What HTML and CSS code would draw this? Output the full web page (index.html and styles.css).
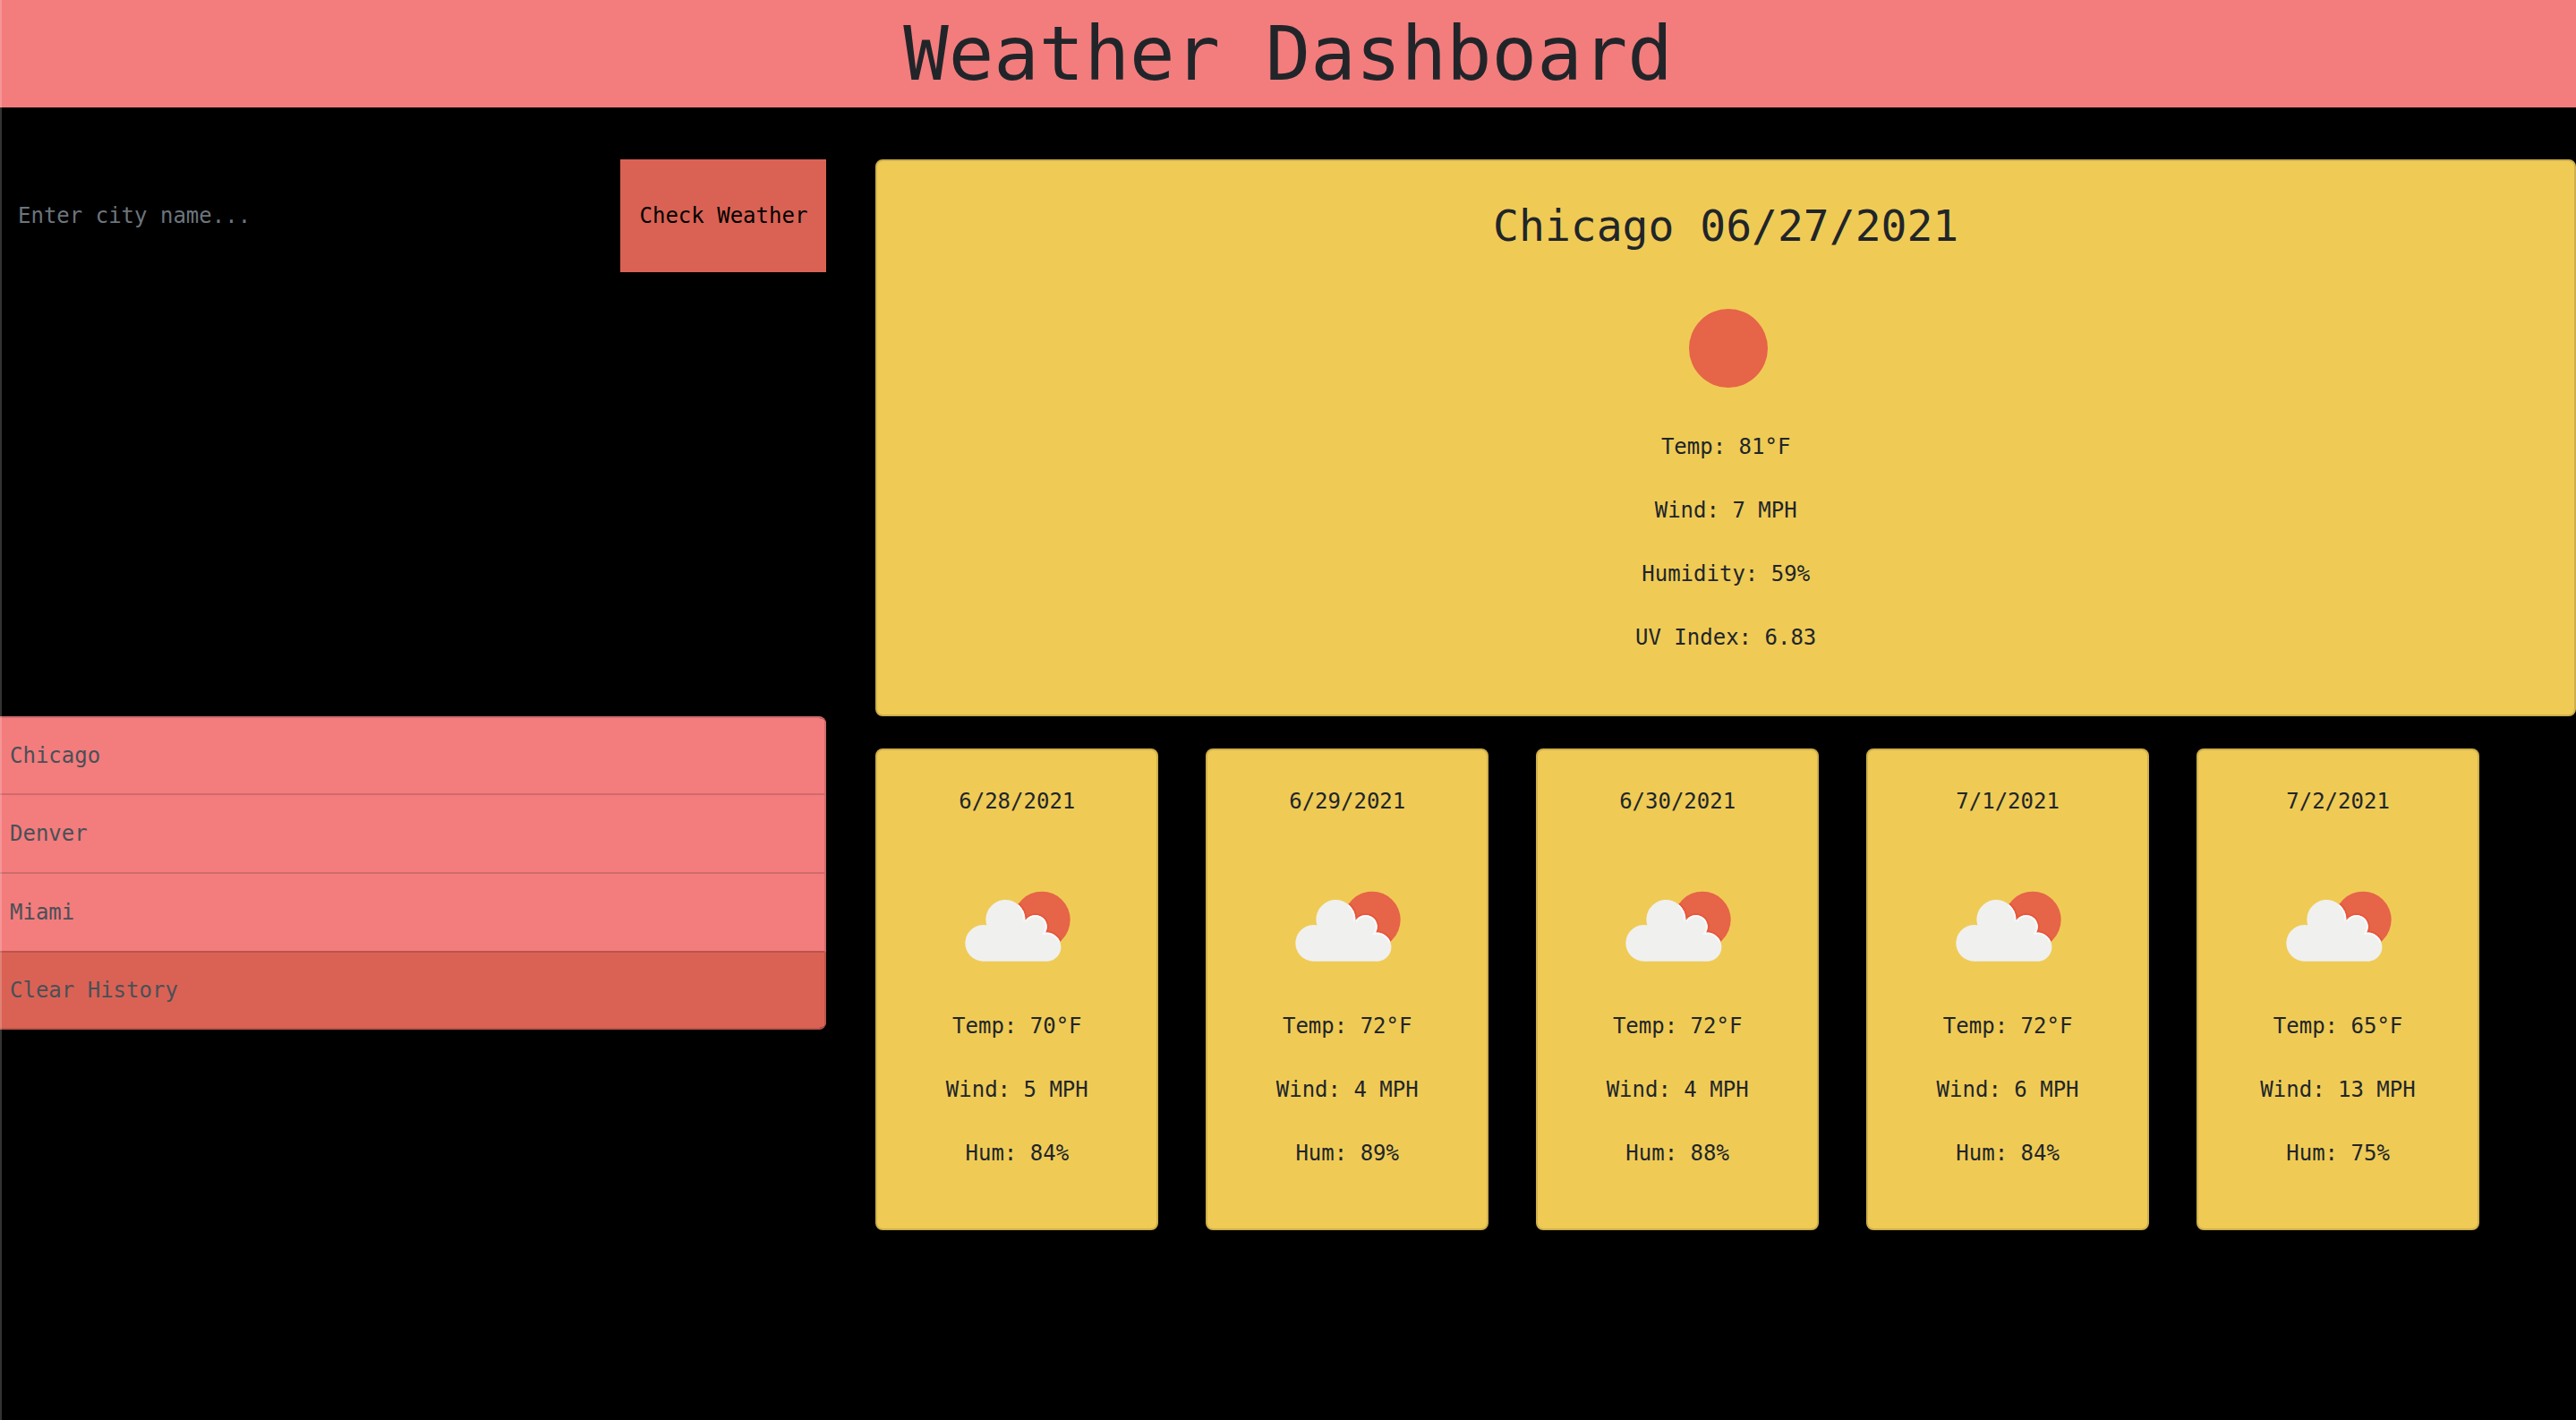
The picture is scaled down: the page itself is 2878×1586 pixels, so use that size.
FILE: index.html
```html
<!DOCTYPE html>
<html lang="en">
<head>
<meta charset="utf-8">
<meta name="viewport" content="width=device-width, initial-scale=1">
<title>Weather Dashboard</title>
<link rel="stylesheet" href="styles.css">
</head>
<body>
<svg class="sprite" aria-hidden="true">
  <defs>
    <clipPath id="sun-clip"><circle cx="372" cy="172" r="95"/></clipPath>
    <clipPath id="cloud-clip"><path d="M177 311A61 61 0 1 1 187 190A66 66 0 1 1 316 176A39 39 0 0 1 384 215A48 48 0 1 1 392 311Z"/></clipPath>
    <symbol id="few-clouds" viewBox="96 75 384 240">
      <circle cx="372" cy="172" r="95" fill="#e66447"/>
      <g clip-path="url(#sun-clip)"><path d="M177 311A61 61 0 1 1 187 190A66 66 0 1 1 316 176A39 39 0 0 1 384 215A48 48 0 1 1 392 311Z" fill="none" stroke="#e8563b" stroke-width="12"/></g>
      <path d="M177 311A61 61 0 1 1 187 190A66 66 0 1 1 316 176A39 39 0 0 1 384 215A48 48 0 1 1 392 311Z" fill="#f0f0ee"/>
      <g clip-path="url(#sun-clip)"><g clip-path="url(#cloud-clip)"><path d="M177 311A61 61 0 1 1 187 190A66 66 0 1 1 316 176A39 39 0 0 1 384 215A48 48 0 1 1 392 311Z" fill="none" stroke="#f6fbfd" stroke-width="12"/></g></g>
    </symbol>
  </defs>
</svg>

<header class="banner">
  <h1 class="banner-title">Weather Dashboard</h1>
</header>

<main class="dashboard">
  <form class="search">
    <input class="search-input" type="text" placeholder="Enter city name..." aria-label="City name">
    <button class="search-button" type="button">Check Weather</button>
  </form>

  <section class="card current">
    <h2 class="current-title">Chicago 06/27/2021</h2>
    <svg class="current-icon" viewBox="0 0 96 90" role="img" aria-label="Clear sky"><circle cx="51" cy="45" r="44" fill="#e66447"/></svg>
    <p class="reading">Temp: 81°F</p>
    <p class="reading">Wind: 7 MPH</p>
    <p class="reading">Humidity: 59%</p>
    <p class="reading">UV Index: 6.83</p>
  </section>

  <div class="history">
    <button class="history-item" type="button">Chicago</button>
    <button class="history-item" type="button">Denver</button>
    <button class="history-item" type="button">Miami</button>
    <button class="history-item history-clear" type="button">Clear History</button>
  </div>

  <section class="forecast">
    <article class="card day">
      <h3 class="day-title">6/28/2021</h3>
      <svg class="day-icon" role="img" aria-label="Few clouds"><use href="#few-clouds"/></svg>
      <p class="reading">Temp: 70°F</p>
      <p class="reading">Wind: 5 MPH</p>
      <p class="reading">Hum: 84%</p>
    </article>
    <article class="card day">
      <h3 class="day-title">6/29/2021</h3>
      <svg class="day-icon" role="img" aria-label="Few clouds"><use href="#few-clouds"/></svg>
      <p class="reading">Temp: 72°F</p>
      <p class="reading">Wind: 4 MPH</p>
      <p class="reading">Hum: 89%</p>
    </article>
    <article class="card day">
      <h3 class="day-title">6/30/2021</h3>
      <svg class="day-icon" role="img" aria-label="Few clouds"><use href="#few-clouds"/></svg>
      <p class="reading">Temp: 72°F</p>
      <p class="reading">Wind: 4 MPH</p>
      <p class="reading">Hum: 88%</p>
    </article>
    <article class="card day">
      <h3 class="day-title">7/1/2021</h3>
      <svg class="day-icon" role="img" aria-label="Few clouds"><use href="#few-clouds"/></svg>
      <p class="reading">Temp: 72°F</p>
      <p class="reading">Wind: 6 MPH</p>
      <p class="reading">Hum: 84%</p>
    </article>
    <article class="card day">
      <h3 class="day-title">7/2/2021</h3>
      <svg class="day-icon" role="img" aria-label="Few clouds"><use href="#few-clouds"/></svg>
      <p class="reading">Temp: 65°F</p>
      <p class="reading">Wind: 13 MPH</p>
      <p class="reading">Hum: 75%</p>
    </article>
  </section>
</main>
</body>
</html>
```
FILE: styles.css
```css
* {
  box-sizing: border-box;
}

body {
  margin: 0;
  min-height: 100vh;
  background: #000;
  color: #212529;
  font-family: "DejaVu Sans Mono", monospace;
  font-size: 24px;
  line-height: 43px;
}

/* thin light edge down the left side of the window */
body::before {
  content: "";
  position: fixed;
  inset: 0 auto 0 0;
  width: 2px;
  background: rgba(255, 255, 255, 0.2);
}

h1, h2, h3, p {
  margin: 0;
  font-weight: 400;
}

input, button {
  border: 0;
  border-radius: 0;
  font: inherit;
}

.sprite {
  position: absolute;
  width: 0;
  height: 0;
}

.banner {
  background: #f37c7d;
  text-align: center;
}

.banner-title {
  font-size: 84px;
  line-height: 120px;
}

.dashboard {
  display: grid;
  grid-template-columns: minmax(0, 1fr) minmax(0, 2fr);
  padding-top: 58px;
}

.search {
  display: flex;
  align-self: start;
  height: 126px;
  margin-right: 36px;
}

.search-input {
  flex: 1;
  min-width: 0;
  padding: 0 20px;
  background: #000;
  color: #fff;
}

.search-input::placeholder {
  color: #6c757d;
  opacity: 1;
}

.search-button {
  padding: 0 21px;
  background: #da6254;
  color: #000;
}

.card {
  display: flex;
  flex-direction: column;
  align-items: center;
  border: 2px solid #ceaf4b;
  border-radius: 8px;
  background: #efcb56;
}

.reading + .reading {
  margin-top: 28px;
}

.current {
  margin-left: 19px;
  padding: 36px 0 64px;
}

.current-title {
  font-size: 48px;
  line-height: 72px;
}

.current-icon {
  width: 96px;
  height: 90px;
  margin: 56px 0 44px;
}

.history {
  display: flex;
  flex-direction: column;
  align-self: start;
  margin-right: 36px;
  overflow: hidden;
  border-top: 2px solid #d06b6c;
  border-bottom: 2px solid #bb5448;
  border-radius: 0 8px 8px 0;
}

.history-item {
  height: 88px;
  padding: 0 11px;
  border-right: 2px solid #d06b6c;
  border-bottom: 2px solid #d06b6c;
  background: #f37c7d;
  color: #495057;
  text-align: left;
}

.history-item:first-child {
  height: 86px;
}

.history-item:nth-last-child(2) {
  border-bottom-color: #bb5448;
}

.history-clear {
  height: 84px;
  border-bottom: 0;
  border-right-color: #bb5448;
  background: #da6254;
}

.forecast {
  display: grid;
  grid-template-columns: repeat(5, minmax(0, 1fr));
  column-gap: 53px;
  margin: 36px 108px 0 19px;
}

.day {
  padding: 36px 0 62px;
}

.day-title {
  font-size: 24px;
}

.day-icon {
  width: 128px;
  height: 80px;
  margin: 78px 0 50px;
}
```
